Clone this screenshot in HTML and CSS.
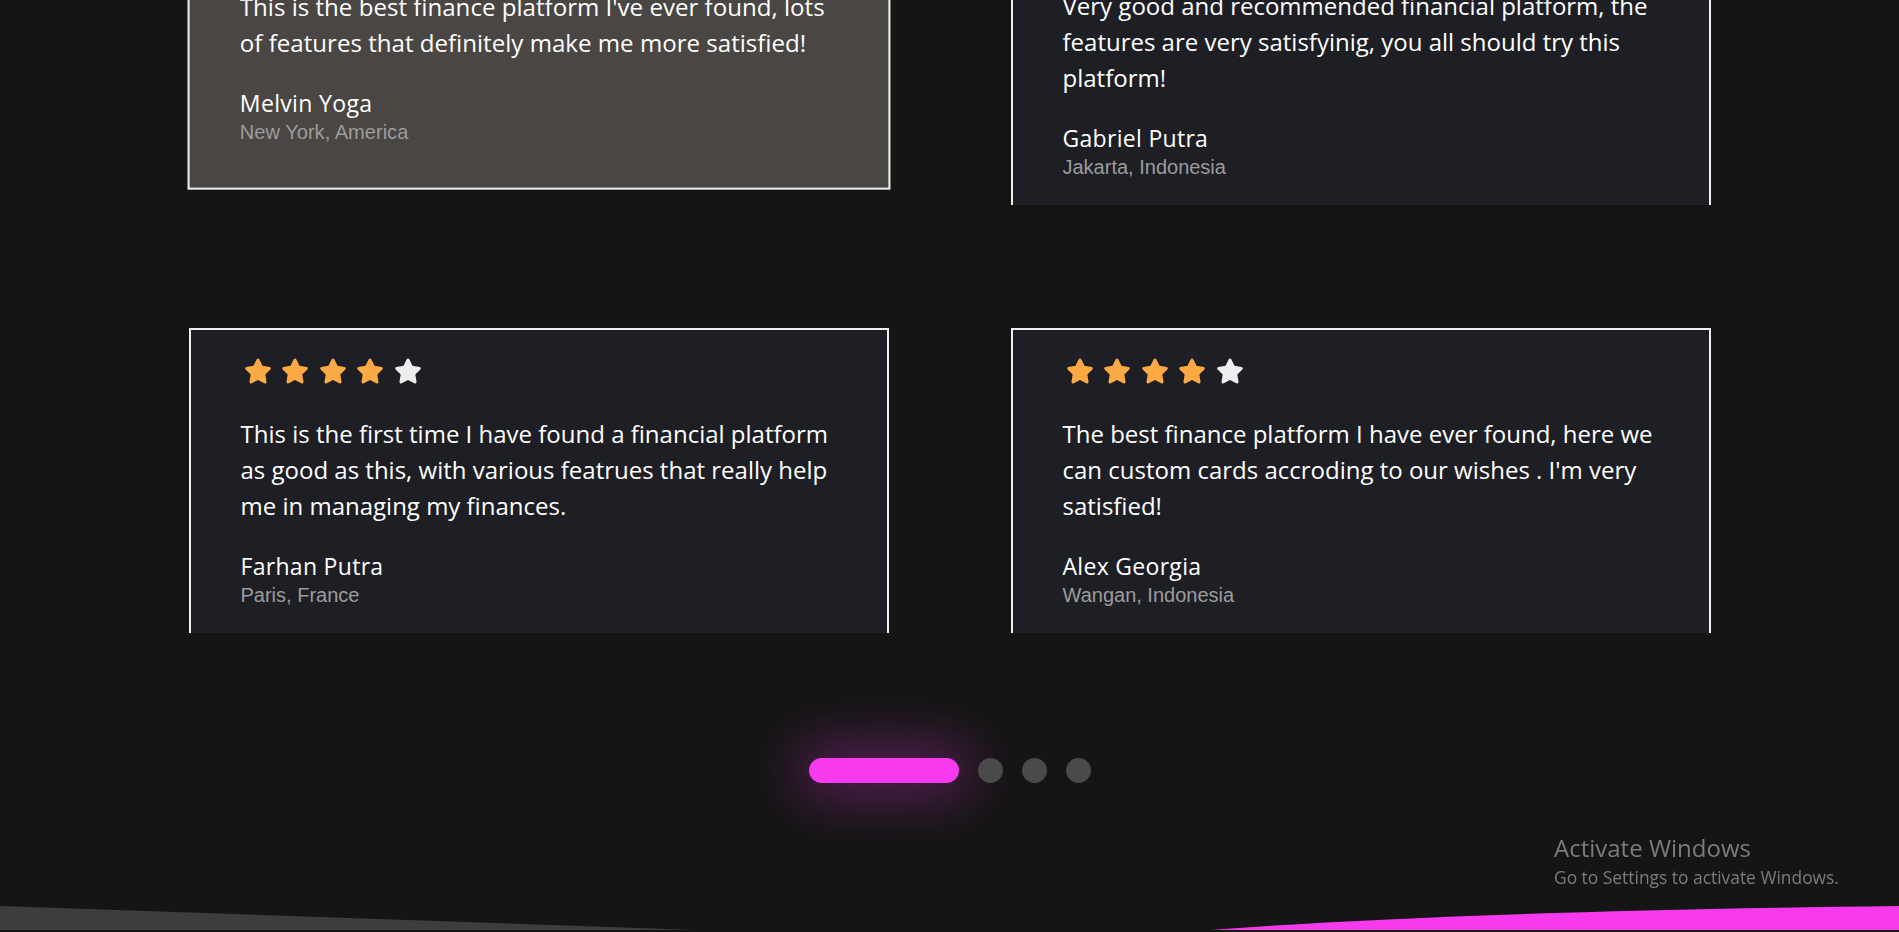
FILE: index.html
```html
<!DOCTYPE html>
<html lang="en">
<head>
<meta charset="utf-8">
<title>Testimonials</title>
<link rel="stylesheet" href="styles.css">
</head>
<body>
<svg class="defs" width="0" height="0" aria-hidden="true">
  <symbol id="star" viewBox="0 0 576 512">
    <path d="M316.9 18C311.6 7 300.4 0 288.1 0s-23.4 7-28.8 18L195 150.3 51.4 171.5c-12 1.8-22 10.2-25.7 21.7s-.7 24.2 7.9 32.7L137.8 329 113.2 474.7c-2 12 3 24.2 12.9 31.3s23 8 33.8 2.3l128.3-68.5 128.3 68.5c10.8 5.7 23.9 4.9 33.8-2.3s14.9-19.3 12.9-31.3L438.5 329 542.7 225.9c8.6-8.5 11.7-21.2 7.9-32.7s-13.7-19.9-25.7-21.7L381.2 150.3 316.9 18z"/>
  </symbol>
</svg>

<main class="page">
  <section class="testimonials">
    <article class="card card--active">
      <div class="stars">
        <svg class="star star--on"><use href="#star"/></svg>
        <svg class="star star--on"><use href="#star"/></svg>
        <svg class="star star--on"><use href="#star"/></svg>
        <svg class="star star--on"><use href="#star"/></svg>
        <svg class="star star--on"><use href="#star"/></svg>
      </div>
      <p class="quote">This is the best finance platform I've ever found, lots<br>of features that definitely make me more satisfied!</p>
      <h3 class="name">Melvin Yoga</h3>
      <span class="place">New York, America</span>
    </article>

    <article class="card">
      <div class="stars">
        <svg class="star star--on"><use href="#star"/></svg>
        <svg class="star star--on"><use href="#star"/></svg>
        <svg class="star star--on"><use href="#star"/></svg>
        <svg class="star star--on"><use href="#star"/></svg>
        <svg class="star star--on"><use href="#star"/></svg>
      </div>
      <p class="quote">Very good and recommended financial platform, the<br>features are very satisfyinig, you all should try this<br>platform!</p>
      <h3 class="name">Gabriel Putra</h3>
      <span class="place">Jakarta, Indonesia</span>
    </article>

    <article class="card">
      <div class="stars">
        <svg class="star star--on"><use href="#star"/></svg>
        <svg class="star star--on"><use href="#star"/></svg>
        <svg class="star star--on"><use href="#star"/></svg>
        <svg class="star star--on"><use href="#star"/></svg>
        <svg class="star"><use href="#star"/></svg>
      </div>
      <p class="quote">This is the first time I have found a financial platform<br>as good as this, with various featrues that really help<br>me in managing my finances.</p>
      <h3 class="name">Farhan Putra</h3>
      <span class="place">Paris, France</span>
    </article>

    <article class="card">
      <div class="stars">
        <svg class="star star--on"><use href="#star"/></svg>
        <svg class="star star--on"><use href="#star"/></svg>
        <svg class="star star--on"><use href="#star"/></svg>
        <svg class="star star--on"><use href="#star"/></svg>
        <svg class="star"><use href="#star"/></svg>
      </div>
      <p class="quote">The best finance platform I have ever found, here we<br>can custom cards accroding to our wishes . I'm very<br>satisfied!</p>
      <h3 class="name">Alex Georgia</h3>
      <span class="place">Wangan, Indonesia</span>
    </article>
  </section>

  <nav class="pager" aria-label="Testimonial pages">
    <span class="pager__dot pager__dot--active"></span>
    <span class="pager__dot"></span>
    <span class="pager__dot"></span>
    <span class="pager__dot"></span>
  </nav>

  <svg class="wave" viewBox="0 0 1899 26" preserveAspectRatio="none" aria-hidden="true">
    <path class="wave__grey" d="M0 2 L696 26 L0 26 Z"/>
    <path class="wave__pink" d="M1211 26 Q1450 7.4 1899 2 L1899 26 Z"/>
  </svg>
</main>

<div class="watermark">
  <div class="watermark__title">Activate Windows</div>
  <div class="watermark__sub">Go to Settings to activate Windows.</div>
</div>
</body>
</html>
```

FILE: styles.css
```css
* {
  box-sizing: border-box;
}

html, body {
  margin: 0;
  padding: 0;
  background: #151515;
  overflow: hidden;
  height: 932px;
}

.defs {
  position: absolute;
  width: 0;
  height: 0;
}

.page {
  display: flex;
  flex-direction: column;
  align-items: center;
}

.testimonials {
  margin-top: -100px;
  width: 1522px;
  display: grid;
  grid-template-columns: 1fr 1fr;
  column-gap: 122px;
  row-gap: 123px;
}

.card {
  display: flex;
  flex-direction: column;
  justify-content: center;
  background: #1e1f25;
  border: 2px solid #f0f0f0;
  border-bottom: 0;
  padding: 28px 50px 26px 50px;
  color: #ffffff;
}

.card--active {
  background: #4a4643;
  border-bottom: 2px solid #f0f0f0;
  transform: translateY(-16px) scale(1.004);
}

.stars {
  display: flex;
  gap: 9.5px;
  height: 26px;
  padding-left: 3px;
}

.star {
  width: 28px;
  height: 26px;
  fill: #eeeeee;
}

.star--on {
  fill: #fdaa45;
}

.quote {
  margin: 32px 0 0 0;
  font-family: "Open Sans", sans-serif;
  font-size: 24px;
  line-height: 36px;
  white-space: nowrap;
  color: #ffffff;
}

.name {
  margin: 26px 0 0 0;
  font-family: "Open Sans", sans-serif;
  font-weight: 500;
  font-size: 23px;
  letter-spacing: 0.3px;
  line-height: 33px;
  color: #ffffff;
}

.place {
  display: block;
  font-family: "Liberation Sans", Arial, sans-serif;
  font-size: 20px;
  line-height: 24px;
  color: #9c9c9c;
}

.pager {
  margin-top: 125px;
  display: flex;
  gap: 19px;
  height: 25px;
}

.pager__dot {
  width: 25px;
  height: 25px;
  border-radius: 50%;
  background: #4a4a4a;
}

.pager__dot--active {
  width: 150px;
  border-radius: 13px;
  background: #f83aef;
  box-shadow: 0 0 55px 14px rgba(248, 58, 239, 0.3);
}

.wave {
  display: block;
  margin-top: 121px;
  width: 1899px;
  height: 26px;
}

.wave__grey {
  fill: #3d3d3d;
}

.wave__pink {
  fill: #f83aef;
}

.watermark {
  position: fixed;
  left: 1554px;
  top: 834px;
  font-family: "Open Sans", sans-serif;
  color: #7c7c7c;
}

.watermark__title {
  font-size: 24px;
  line-height: 28px;
}

.watermark__sub {
  margin-top: 5px;
  font-size: 17.4px;
  line-height: 21px;
}
```
